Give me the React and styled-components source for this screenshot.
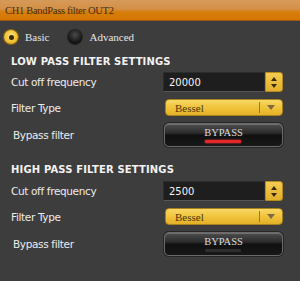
import React, { useState } from 'react';
import styled, { createGlobalStyle } from 'styled-components';

const GlobalStyle = createGlobalStyle`
  html, body {
    margin: 0;
    padding: 0;
    background: #3d3d3d;
  }
`;

const Page = styled.div`
  width: 300px;
  height: 281px;
  background: #3d3d3d;
  overflow: hidden;
`;

const Header = styled.div`
  height: 21px;
  box-sizing: border-box;
  padding-left: 5px;
  display: flex;
  align-items: center;
  background: linear-gradient(to bottom, #d69a58 0%, #d59047 45%, #d67d0a 60%, #d57700 100%);
  border-bottom: 1px solid #9a5a10;
`;

const Title = styled.span`
  font-family: "Liberation Serif", serif;
  font-size: 10.5px;
  letter-spacing: -0.3px;
  color: #4a2c0c;
`;

const ModeRow = styled.div`
  display: flex;
  align-items: center;
  padding: 9px 4px 0;
`;

const ModeOption = styled.label`
  display: flex;
  align-items: center;
  gap: 7px;
  margin-right: ${p => p.$gap || 0}px;
  cursor: pointer;
`;

const RadioDot = styled.span`
  width: 14px;
  height: 14px;
  border-radius: 50%;
  box-sizing: border-box;
  display: flex;
  align-items: center;
  justify-content: center;
  background: ${p => p.$checked
    ? 'radial-gradient(circle at 50% 40%, #fbe27a 0%, #f0c030 60%, #c89010 100%)'
    : 'radial-gradient(circle at 50% 35%, #4a4a4a 0%, #111 70%, #000 100%)'};
  box-shadow: 0 0 0 1px ${p => p.$checked ? '#8a6410' : '#222'};

  &::after {
    content: '';
    display: ${p => p.$checked ? 'block' : 'none'};
    width: 5px;
    height: 5px;
    border-radius: 50%;
    background: #3a2a08;
  }
`;

const ModeText = styled.span`
  font-family: "Liberation Serif", serif;
  font-size: 11px;
  color: #e6e6e6;
`;

const Section = styled.section`
  padding-left: 11px;
  margin-top: ${p => p.$top}px;
`;

const Heading = styled.h3`
  margin: 0;
  font-family: "DejaVu Sans", sans-serif;
  font-weight: bold;
  font-size: 10px;
  letter-spacing: 0.15px;
  line-height: 12px;
  color: #f2f2f2;
`;

const Rows = styled.div`
  display: grid;
  grid-template-columns: 152px 120px;
  row-gap: 7px;
  align-items: center;
  margin-top: ${p => p.$top}px;
`;

const Label = styled.span`
  font-family: "DejaVu Sans", sans-serif;
  font-size: 10.5px;
  letter-spacing: -0.35px;
  color: #ececec;
  padding-left: ${p => p.$indent || 0}px;
`;

const NumberBox = styled.div`
  display: flex;
  height: 20px;
`;

const NumberInput = styled.input`
  width: 102px;
  height: 20px;
  box-sizing: border-box;
  border: 1px solid #2c2c2c;
  border-bottom-color: #555;
  background: #1e1e1e;
  color: #f4f4f4;
  font-family: "DejaVu Sans", sans-serif;
  font-size: 10px;
  padding: 0 0 0 5px;
  outline: none;
`;

const Spinner = styled.div`
  width: 18px;
  height: 20px;
  box-sizing: border-box;
  border-radius: 0 3px 3px 0;
  background: linear-gradient(to bottom, #f2cc52 0%, #e3b02c 100%);
  border: 1px solid #b88a1c;
  display: flex;
  flex-direction: column;
  align-items: center;
  justify-content: center;
  gap: 3px;
`;

const Arrow = styled.span`
  width: 0;
  height: 0;
  border-left: 3px solid transparent;
  border-right: 3px solid transparent;
  ${p => p.$up ? 'border-bottom: 4px solid #3a2c0c;' : 'border-top: 4px solid #3a2c0c;'}
`;

const SelectBox = styled.div`
  margin-left: 2px;
  width: 118px;
  height: 17px;
  box-sizing: border-box;
  border-radius: 4px;
  border: 1px solid #a8801c;
  background: linear-gradient(to bottom, #f8d866 0%, #f0c43c 50%, #e4b026 100%);
  display: flex;
  align-items: stretch;
`;

const SelectValue = styled.span`
  flex: 1;
  display: flex;
  align-items: center;
  padding-left: 9px;
  font-family: "Liberation Serif", serif;
  font-size: 11px;
  color: #4a360c;
  border-right: 1px solid #9c7818;
  margin: 2px 0;
`;

const SelectArrow = styled.span`
  width: 22px;
  display: flex;
  align-items: center;
  justify-content: center;

  &::after {
    content: '';
    border-left: 4px solid transparent;
    border-right: 4px solid transparent;
    border-top: 5px solid #806a44;
  }
`;

const BypassButton = styled.button`
  position: relative;
  margin-left: 1px;
  width: 119px;
  height: 24px;
  box-sizing: border-box;
  border-radius: 5px;
  border: 1px solid #6a6a6a;
  background: linear-gradient(to bottom, #4e4e4e 0%, #2c2c2c 40%, #101010 52%, #181818 100%);
  box-shadow: inset 0 1px 0 rgba(255, 255, 255, 0.2), 0 0 0 1px #262626;
  padding: 0 0 6px;
  font-family: "Liberation Serif", serif;
  font-size: 10.5px;
  color: #dcdcdc;
  cursor: pointer;

  &::after {
    content: '';
    position: absolute;
    left: 40px;
    bottom: 3px;
    width: 36px;
    height: 3px;
    border-radius: 1px;
    background: ${p => p.$active ? '#e8262a' : '#2e2e2e'};
    box-shadow: ${p => p.$active ? '0 0 2px #ff4040' : 'none'};
  }
`;

function FilterSection({ title, value, top, gap, active }) {
  return (
    <Section $top={top}>
      <Heading>{title}</Heading>
      <Rows $top={gap}>
        <Label>Cut off frequency</Label>
        <NumberBox>
          <NumberInput defaultValue={value} />
          <Spinner>
            <Arrow $up />
            <Arrow />
          </Spinner>
        </NumberBox>
        <Label>Filter Type</Label>
        <SelectBox>
          <SelectValue>Bessel</SelectValue>
          <SelectArrow />
        </SelectBox>
        <Label $indent={2}>Bypass filter</Label>
        <BypassButton $active={active}>BYPASS</BypassButton>
      </Rows>
    </Section>
  );
}

export default function App() {
  const [mode, setMode] = useState('basic');

  return (
    <Page>
      <GlobalStyle />
      <Header>
        <Title>CH1 BandPass filter OUT2</Title>
      </Header>
      <ModeRow>
        <ModeOption $gap={19} onClick={() => setMode('basic')}>
          <RadioDot $checked={mode === 'basic'} />
          <ModeText>Basic</ModeText>
        </ModeOption>
        <ModeOption onClick={() => setMode('advanced')}>
          <RadioDot $checked={mode === 'advanced'} />
          <ModeText>Advanced</ModeText>
        </ModeOption>
      </ModeRow>
      <FilterSection title="LOW PASS FILTER SETTINGS" value="20000" top={12} gap={4} active />
      <FilterSection title="HIGH PASS FILTER SETTINGS" value="2500" top={17} gap={5} />
    </Page>
  );
}
